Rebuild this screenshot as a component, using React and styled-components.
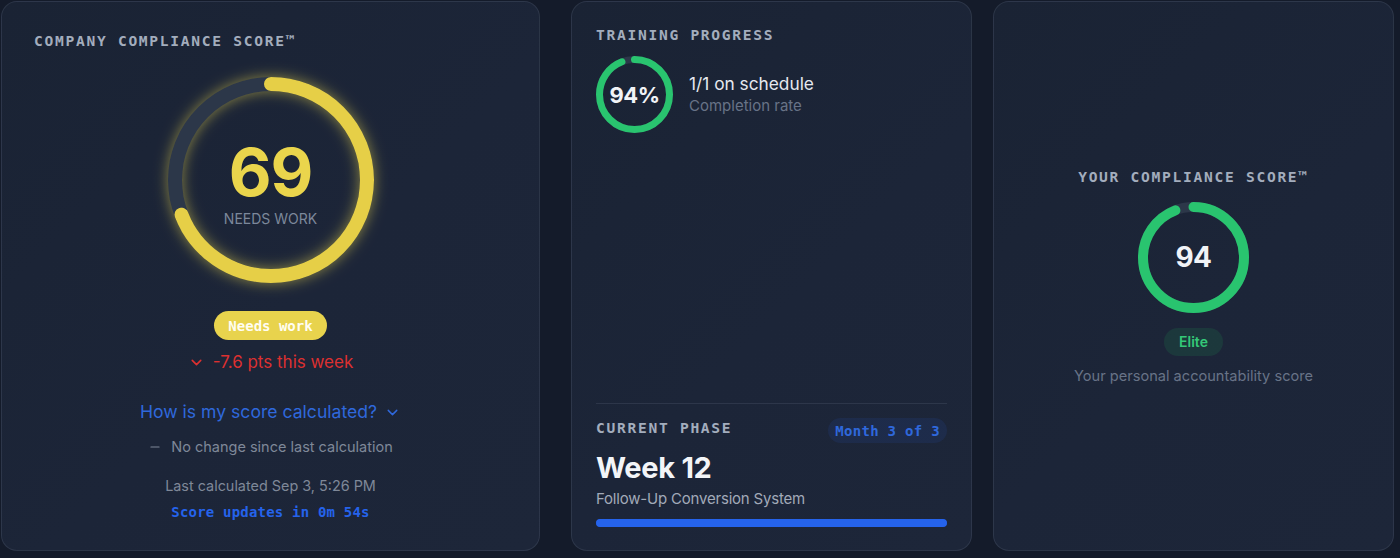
import React from "react";
import styled, { createGlobalStyle } from "styled-components";
import { ChevronDown, Minus } from "lucide-react";

const GlobalStyle = createGlobalStyle`
  html, body {
    margin: 0;
    padding: 0;
    background: #141b2a;
  }
  body {
    font-family: Inter, "Noto Sans", sans-serif;
    -webkit-font-smoothing: antialiased;
  }
`;

const Page = styled.div`
  display: flex;
  align-items: flex-start;
  padding: 1px 0 0 1px;
  height: 557px;
  box-sizing: border-box;
`;

const Card = styled.div`
  box-sizing: border-box;
  width: ${(p) => p.$w}px;
  height: 550px;
  margin-right: ${(p) => p.$gap || 0}px;
  border-radius: 16px;
  border: 1px solid rgba(148, 163, 184, 0.14);
  background: linear-gradient(135deg, #1a2334 0%, #1c2538 55%, #1d2639 100%);
  display: flex;
  flex-direction: column;
`;

const CompanyCard = styled(Card)`
  padding: 29px 32px;
  align-items: center;
`;

const TrainingCard = styled(Card)`
  padding: 23px 24px 23px 24px;
  justify-content: space-between;
`;

const PersonalCard = styled(Card)`
  align-items: center;
  justify-content: center;
`;

const Label = styled.div`
  font-family: "DejaVu Sans Mono", "Liberation Mono", monospace;
  font-weight: 700;
  font-size: 14.6px;
  line-height: 20px;
  letter-spacing: 1.7px;
  color: #a3adbd;
  text-transform: uppercase;
  align-self: ${(p) => (p.$center ? "center" : "flex-start")};
`;

const RingBox = styled.div`
  position: relative;
  width: ${(p) => p.$size}px;
  height: ${(p) => p.$size}px;
  margin-top: ${(p) => p.$mt || 0}px;
  flex-shrink: 0;
  border-radius: 50%;
`;

const RingSvg = styled.svg`
  position: absolute;
  inset: 0;
  transform: rotate(-90deg);
  overflow: visible;
  filter: ${(p) => (p.$glow ? `drop-shadow(0 0 7px ${p.$glow})` : "none")};
`;

const RingCenter = styled.div`
  position: absolute;
  inset: 0;
  display: flex;
  flex-direction: column;
  align-items: center;
  justify-content: center;
`;

const BigScore = styled.div`
  font-size: 66px;
  line-height: 60px;
  font-weight: 700;
  color: #ead54c;
  letter-spacing: -1px;
  margin-top: 8px;
`;

const ScoreCaption = styled.div`
  font-size: 14px;
  line-height: 16px;
  color: #7c889b;
  text-transform: uppercase;
  margin-top: 9px;
`;

const RingValue = styled.div`
  font-size: ${(p) => p.$size}px;
  font-weight: 700;
  color: #f1f3f7;
  letter-spacing: -0.5px;
`;

const Ring = ({ size, stroke, value, color, track, glow, mt, children }) => {
  const r = (size - stroke) / 2;
  const c = 2 * Math.PI * r;
  return (
    <RingBox $size={size} $mt={mt}>
      <RingSvg width={size} height={size} viewBox={`0 0 ${size} ${size}`} $glow={glow}>
        <circle cx={size / 2} cy={size / 2} r={r} fill="none" stroke={track} strokeWidth={stroke} />
        <circle
          cx={size / 2}
          cy={size / 2}
          r={r}
          fill="none"
          stroke={color}
          strokeWidth={stroke}
          strokeLinecap="round"
          strokeDasharray={`${(c * value) / 100} ${c}`}
        />
      </RingSvg>
      <RingCenter>{children}</RingCenter>
    </RingBox>
  );
};

const StatusPill = styled.div`
  margin-top: 28px;
  height: 29px;
  padding: 0 14px;
  border-radius: 15px;
  background: #e8d34d;
  color: #fffdf2;
  font-family: "DejaVu Sans Mono", "Liberation Mono", monospace;
  font-weight: 700;
  font-size: 14px;
  display: flex;
  align-items: center;
`;

const Delta = styled.div`
  margin-top: 12px;
  display: flex;
  align-items: center;
  gap: 8px;
  color: #dc3030;
  font-size: 17px;
  line-height: 20px;
`;

const HowLink = styled.div`
  margin-top: 29px;
  display: flex;
  align-items: center;
  gap: 7px;
  color: #2f68dc;
  font-size: 17.6px;
  line-height: 22px;
`;

const Muted = styled.div`
  margin-top: ${(p) => p.$mt || 0}px;
  display: flex;
  align-items: center;
  gap: 9px;
  color: #7f8898;
  font-size: ${(p) => p.$fs || 14.5}px;
  line-height: 20px;
`;

const Countdown = styled.div`
  margin-top: 7px;
  font-family: "DejaVu Sans Mono", "Liberation Mono", monospace;
  font-weight: 700;
  font-size: 14px;
  line-height: 18px;
  letter-spacing: 0.2px;
  color: #2563eb;
`;

const TopBlock = styled.div`
  display: flex;
  flex-direction: column;
`;

const ProgressRow = styled.div`
  margin-top: 11px;
  display: flex;
  align-items: center;
  gap: 16px;
`;

const RowText = styled.div`
  display: flex;
  flex-direction: column;
  gap: 2px;
`;

const Primary = styled.div`
  font-size: 17.3px;
  line-height: 21px;
  color: #e6e9ef;
`;

const Secondary = styled.div`
  margin-top: ${(p) => p.$mt || 0}px;
  font-size: ${(p) => p.$fs || 15}px;
  line-height: 20px;
  color: #687387;
`;

const PhaseBlock = styled.div`
  border-top: 1px solid rgba(148, 163, 184, 0.14);
  padding-top: 14px;
  display: flex;
  flex-direction: column;
`;

const PhaseHead = styled.div`
  display: flex;
  justify-content: space-between;
  align-items: center;
`;

const MonthPill = styled.div`
  height: 25px;
  padding: 0 7px;
  border-radius: 13px;
  background: rgba(37, 99, 235, 0.1);
  color: #2f68dc;
  font-family: "DejaVu Sans Mono", "Liberation Mono", monospace;
  font-weight: 700;
  font-size: 14px;
  letter-spacing: 0.3px;
  display: flex;
  align-items: center;
`;

const WeekTitle = styled.div`
  margin-top: 8px;
  font-size: 29px;
  line-height: 34px;
  font-weight: 700;
  color: #f3f5f8;
  letter-spacing: -0.3px;
`;

const PhaseName = styled.div`
  margin-top: 4px;
  font-size: 15px;
  line-height: 20px;
  color: #a2aab8;
  letter-spacing: -0.2px;
`;

const Bar = styled.div`
  margin-top: 10px;
  height: 8px;
  border-radius: 4px;
  background: #1f4fc4;
  overflow: hidden;
`;

const BarFill = styled.div`
  height: 100%;
  background: #2563eb;
  border-radius: 4px;
`;

const ElitePill = styled.div`
  margin-top: 15px;
  height: 28px;
  padding: 0 15px;
  border-radius: 14px;
  background: rgba(34, 197, 94, 0.12);
  color: #34c878;
  font-size: 14px;
  font-weight: 600;
  display: flex;
  align-items: center;
`;

const TRACK = "#2c3749";

export default function App() {
  const progress = 100;
  return (
    <>
      <GlobalStyle />
      <Page>
        <CompanyCard $w={539} $gap={31}>
          <Label>Company Compliance Score™</Label>
          <Ring
            size={206}
            stroke={14}
            value={69}
            color="#e6cf47"
            track={TRACK}
            glow="rgba(234, 213, 76, 0.55)"
            mt={26}
          >
            <BigScore>69</BigScore>
            <ScoreCaption>Needs work</ScoreCaption>
          </Ring>
          <StatusPill>Needs work</StatusPill>
          <Delta>
            <ChevronDown size={17} strokeWidth={2.2} />
            <span>-7.6 pts this week</span>
          </Delta>
          <HowLink>
            <span>How is my score calculated?</span>
            <ChevronDown size={17} strokeWidth={2} />
          </HowLink>
          <Muted $mt={14}>
            <Minus size={14} strokeWidth={1.8} />
            <span>No change since last calculation</span>
          </Muted>
          <Muted $mt={19} $fs={14.4}>Last calculated Sep 3, 5:26 PM</Muted>
          <Countdown>Score updates in 0m 54s</Countdown>
        </CompanyCard>

        <TrainingCard $w={401} $gap={21}>
          <TopBlock>
            <Label>Training Progress</Label>
            <ProgressRow>
              <Ring size={77} stroke={7} value={94} color="#29c46f" track={TRACK}>
                <RingValue $size={22}>94%</RingValue>
              </Ring>
              <RowText>
                <Primary>1/1 on schedule</Primary>
                <Secondary>Completion rate</Secondary>
              </RowText>
            </ProgressRow>
          </TopBlock>
          <PhaseBlock>
            <PhaseHead>
              <Label>Current Phase</Label>
              <MonthPill>Month 3 of 3</MonthPill>
            </PhaseHead>
            <WeekTitle>Week 12</WeekTitle>
            <PhaseName>Follow-Up Conversion System</PhaseName>
            <Bar>
              <BarFill style={{ width: `${progress}%` }} />
            </Bar>
          </PhaseBlock>
        </TrainingCard>

        <PersonalCard $w={401}>
          <Label $center>Your Compliance Score™</Label>
          <Ring size={111} stroke={10} value={94} color="#29c46f" track={TRACK} mt={15}>
            <RingValue $size={28}>94</RingValue>
          </Ring>
          <ElitePill>Elite</ElitePill>
          <Secondary $mt={10} $fs={14.6}>Your personal accountability score</Secondary>
        </PersonalCard>
      </Page>
    </>
  );
}
